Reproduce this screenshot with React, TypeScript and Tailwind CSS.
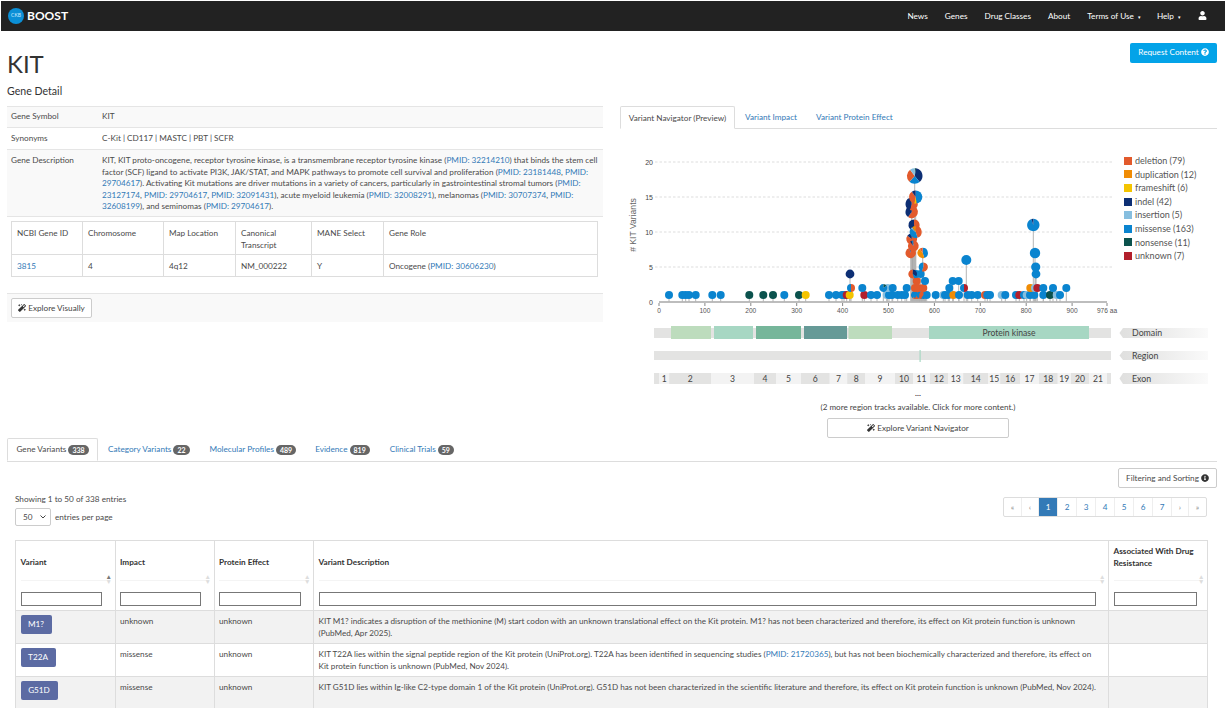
import { FaInfoCircle, FaMagic, FaQuestionCircle, FaUser } from "react-icons/fa";

const B = "#0a84cf";
const O = "#e25a2c";
const D = "#f08c05";
const Y = "#f4c400";
const N = "#0d2f74";
const L = "#86bedf";
const G = "#0b524d";
const R = "#b2202c";

type Slice = [string, number];
type Dot = { x: number; y: number; r?: number; c?: string; pie?: Slice[] };

const legend: [string, string][] = [
  [O, "deletion (79)"],
  [D, "duplication (12)"],
  [Y, "frameshift (6)"],
  [N, "indel (42)"],
  [L, "insertion (5)"],
  [B, "missense (163)"],
  [G, "nonsense (11)"],
  [R, "unknown (7)"],
];

const row = (y: number, list: [number, string][]): Dot[] => list.map(([x, c]) => ({ x, y, c }));
const OB: Slice[] = [[O, 0.6], [B, 0.4]];

const dots: Dot[] = [
  ...row(295, [
    [669, B], [682.3, B], [685.7, B], [689, B], [695.7, B], [712.3, B], [720.7, B], [749.3, G], [763.3, G], [773, G],
    [784.3, B], [799, G], [805.7, Y], [829, B], [836, B], [842, B], [844, B], [846.7, R], [849.7, Y], [864.3, R],
    [871, B], [877, B], [886.7, L], [889, B], [892, B], [897.7, B], [901.7, B], [905, B], [926.7, B], [935.7, B],
    [943.3, L], [945, B], [948.3, B], [953.3, D], [959, B], [967.7, B], [971.7, B], [977.7, B], [985, O], [987.3, B],
    [990, B], [1001.7, L], [1005.3, B], [1016, B], [1019.3, R], [1024, B], [1026.7, L], [1030, B], [1034.3, B],
    [1043.3, B], [1050, G], [1056.7, L], [1060, B],
  ]),
  { x: 915, y: 295, pie: OB }, { x: 917.3, y: 295, pie: OB }, { x: 920.7, y: 295, pie: OB }, { x: 923.3, y: 295, pie: [[B, 0.6], [O, 0.4]] },
  ...row(288, [[862.3, B], [887.7, L], [892.7, B], [906.7, B], [915, O], [918.3, O], [923.3, O], [949.3, B], [1030.3, D], [1035, L], [1037.3, R], [1043.3, B], [1053, B], [1066.3, B]]),
  { x: 851, y: 288, pie: [[O, 0.5], [B, 0.5]] },
  { x: 883.3, y: 288, pie: [[G, 0.15], [B, 0.85]] },
  { x: 964, y: 288, pie: [[R, 0.5], [B, 0.5]] },
  ...row(281, [[952.7, B], [958.7, B], [925, B], [916.7, O]]),
  { x: 850, y: 274, r: 4.4, c: N },
  { x: 916, y: 274, c: B },
  { x: 920.7, y: 274, c: B },
  { x: 1036, y: 274, r: 4.4, c: B },
  { x: 912.7, y: 274, r: 4.4, pie: [[N, 0.35], [B, 0.1], [O, 0.55]] },
  { x: 923.3, y: 267, r: 4.6, pie: [[O, 0.55], [B, 0.45]] },
  { x: 1035.7, y: 267, r: 4.6, c: B },
  { x: 966.3, y: 260, r: 5, c: B },
  { x: 910.7, y: 253, r: 5.2, pie: [[O, 0.95], [N, 0.05]] },
  { x: 922.7, y: 253, r: 5.2, pie: [[B, 0.45], [D, 0.45], [O, 0.1]] },
  { x: 1035, y: 253, r: 5.2, c: B },
  { x: 911.7, y: 239, r: 5.4, pie: [[O, 0.85], [N, 0.15]] },
  { x: 913.3, y: 246, r: 5.4, pie: [[O, 0.9], [N, 0.05], [B, 0.05]] },
  { x: 914, y: 225, r: 5.6, pie: [[O, 0.45], [N, 0.55]] },
  { x: 915.7, y: 232, r: 6, pie: [[O, 0.45], [B, 0.4], [L, 0.05], [D, 0.1]] },
  { x: 1033.3, y: 225, r: 6.2, pie: [[B, 0.95], [N, 0.05]] },
  { x: 911.7, y: 212, r: 6.2, pie: [[O, 0.6], [N, 0.4]] },
  { x: 911.7, y: 204, r: 6.2, pie: [[O, 0.55], [N, 0.45]] },
  { x: 915.7, y: 197, r: 6.6, pie: [[B, 0.48], [Y, 0.06], [O, 0.36], [N, 0.1]] },
  { x: 914.7, y: 176, r: 7.8, pie: [[G, 0.03], [N, 0.36], [B, 0.23], [O, 0.28], [L, 0.1]] },
];

const domains: [number, number, string][] = [
  [671, 711, "#bddcbd"],
  [714, 753, "#a7d7c3"],
  [756, 801, "#76b69a"],
  [804, 847, "#669a97"],
  [848.5, 892, "#bddcbd"],
  [929, 1089, "#a7d7c3"],
];

const exons: [number, number, string][] = [
  [659, 669.5, "1"], [669.5, 711, "2"], [711, 754, "3"], [754, 776, "4"], [776, 801, "5"], [801, 829.5, "6"], [829.5, 847.5, "7"],
  [847.5, 865, "8"], [865, 895, "9"], [895, 913, "10"], [913, 930, "11"], [930, 948, "12"], [948, 963.5, "13"], [963.5, 988, "14"],
  [988, 1000.5, "15"], [1000.5, 1020, "16"], [1020, 1039, "17"], [1039, 1057.5, "18"], [1057.5, 1071, "19"], [1071, 1089, "20"], [1089, 1107, "21"],
];

const tracks: [string, number, number][] = [
  ["Domain", 328, 338],
  ["Region", 351, 360],
  ["Exon", 373, 384],
];

function Pie({ d }: { d: Dot }) {
  const r = d.r ?? 4;
  let a = 0;
  return (
    <g>
      {d.pie!.map(([c, f], i) => {
        const s = a * Math.PI * 2;
        a += f;
        const e = a * Math.PI * 2;
        const p = `M${d.x} ${d.y}L${d.x + r * Math.sin(s)} ${d.y - r * Math.cos(s)}A${r} ${r} 0 ${f > 0.5 ? 1 : 0} 1 ${d.x + r * Math.sin(e)} ${d.y - r * Math.cos(e)}Z`;
        return <path key={i} d={p} fill={c} />;
      })}
    </g>
  );
}

function Chart() {
  return (
    <svg width="500" height="191" viewBox="620 129 500 191" className="block shrink-0" style={{ fontFamily: "'Liberation Sans', sans-serif" }}>
      {[162, 197, 232, 267].map((y) => (
        <line key={y} x1="655" x2="1112" y1={y} y2={y} stroke="#cfcfcf" strokeWidth="0.7" strokeDasharray="2.5 2" />
      ))}
      {[[0, 302], [5, 267], [10, 232], [15, 197], [20, 162]].map(([v, y]) => (
        <text key={v} x="653" y={y + 2.5} fontSize="7" fill="#444" textAnchor="end">{v}</text>
      ))}
      <text transform="translate(636 225) rotate(-90)" fontSize="8.6" fill="#666" textAnchor="middle"># KIT Variants</text>
      <rect x="659" y="301" width="448" height="2" fill="#bdbdbd" />
      <rect x="911" y="253" width="5" height="49" fill="#9c9c9c" />
      <rect x="911" y="285" width="15" height="17" fill="#b0b0b0" />
      {[0, 100, 200, 300, 400, 500, 600, 700, 800, 900].map((v) => {
        const x = 659 + v * 0.459;
        return (
          <g key={v}>
            <line x1={x} x2={x} y1="303" y2="306" stroke="#555" strokeWidth="0.7" />
            <text x={x} y="313" fontSize="6.6" fill="#555" textAnchor="middle">{v}</text>
          </g>
        );
      })}
      <line x1="1107" x2="1107" y1="303" y2="306" stroke="#555" strokeWidth="0.7" />
      <text x="1107" y="313" fontSize="6.6" fill="#555" textAnchor="middle">976 aa</text>
      {dots.map((d, i) => (
        <line key={i} x1={d.x} x2={d.x} y1={d.y} y2="302" stroke="#b4b4b4" strokeWidth="1" />
      ))}
      {dots.map((d, i) =>
        d.pie ? <Pie key={i} d={d} /> : <circle key={i} cx={d.x} cy={d.y} r={d.r ?? 4} fill={d.c} />,
      )}
    </svg>
  );
}

function Tracks() {
  return (
    <svg width="597" height="70" viewBox="620 320 597 70" className="block" style={{ fontFamily: "Lato, sans-serif" }}>
      <rect x="654" y="328" width="457" height="10" fill="#e3e3e2" />
      {domains.map(([a, b, c]) => (
        <rect key={a} x={a} y="326" width={b - a} height="13" fill={c} />
      ))}
      <text x="1009" y="335.5" fontSize="8.6" fill="#444" textAnchor="middle">Protein kinase</text>
      <rect x="654" y="351" width="457" height="9" fill="#e3e3e2" />
      <rect x="919.5" y="350" width="1.2" height="12" fill="#a7d7c3" />
      <rect x="654" y="373" width="457" height="11" fill="#e3e3e2" />
      {exons.map(([a, b, t], i) => (
        <g key={t}>
          <rect x={a} y="373" width={b - a} height="11" fill={i % 2 ? "#e3e3e2" : "#f3f3f3"} />
          <text x={(a + b) / 2} y="381.8" fontSize="8.6" fill="#444" textAnchor="middle">{t}</text>
        </g>
      ))}
      <defs>
        <linearGradient id="tag">
          <stop offset="0" stopColor="#dfdfde" />
          <stop offset="1" stopColor="#fafafa" />
        </linearGradient>
      </defs>
      {tracks.map(([t, a, b]) => (
        <g key={t}>
          <path d={`M1123 ${a}H1208V${b}H1123L1119.5 ${(a + b) / 2}Z`} fill="url(#tag)" />
          <text x="1132" y={(a + b) / 2 + 3} fontSize="8.8" fill="#444">{t}</text>
        </g>
      ))}
    </svg>
  );
}

function Pmid({ id }: { id: string }) {
  return (
    <>
      <a className="text-[#337ab7]">PMID:</a> <a className="text-[#337ab7]">{id}</a>
    </>
  );
}

function Badge({ n }: { n: string }) {
  return <span className="ml-[2px] rounded-full bg-[#666] px-[4px] text-[7px] font-bold leading-[10px] text-white">{n}</span>;
}

function ToolButton({ label, className }: { label: string; className: string }) {
  return (
    <button className={`flex items-center justify-center gap-[2px] rounded-[2px] border border-[#ccc] bg-white text-[8.2px] text-[#444] ${className}`}>
      <FaMagic className="h-[8px] w-[8px] text-[#333]" />
      {label}
    </button>
  );
}

const pages: [string, string][] = [
  ["«", "w-[18px] text-[#888]"],
  ["‹", "w-[17px] text-[#888]"],
  ["1", "w-[19px] bg-[#337ab7] text-white"],
  ["2", "w-[19px]"],
  ["3", "w-[19px]"],
  ["4", "w-[19px]"],
  ["5", "w-[19px]"],
  ["6", "w-[19px]"],
  ["7", "w-[19px]"],
  ["›", "w-[17px] text-[#888]"],
  ["»", "w-[17px] text-[#888]"],
];

const variantRows = [
  {
    name: "M1?",
    w: "w-[31px]",
    impact: "unknown",
    bg: "bg-[#f2f2f2]",
    desc: <>KIT M1? indicates a disruption of the methionine (M) start codon with an unknown translational effect on the Kit protein. M1? has not been characterized and therefore, its effect on Kit protein function is unknown (PubMed, Apr 2025).</>,
  },
  {
    name: "T22A",
    w: "w-[35px]",
    impact: "missense",
    bg: "bg-white",
    desc: <>KIT T22A lies within the signal peptide region of the Kit protein (UniProt.org). T22A has been identified in sequencing studies (<Pmid id="21720365" />), but has not been biochemically characterized and therefore, its effect on Kit protein function is unknown (PubMed, Nov 2024).</>,
  },
  {
    name: "G51D",
    w: "w-[37px]",
    impact: "missense",
    bg: "bg-[#f2f2f2]",
    desc: <>KIT G51D lies within Ig-like C2-type domain 1 of the Kit protein (UniProt.org). G51D has not been characterized in the scientific literature and therefore, its effect on Kit protein function is unknown (PubMed, Nov 2024).</>,
  },
];

function HeadCell({ title, arrow, last }: { title: string; arrow?: boolean; last?: boolean }) {
  return (
    <th className="border border-[#ddd] px-[4.5px] pb-[3px] pt-[5px] text-left align-top font-bold">
      <div className={`relative h-[35px] border-b border-[#f4f4f4] leading-[11.5px] ${last ? "pt-0" : "pt-[11px]"}`}>
        {title}
        <span className="absolute bottom-[-4px] right-[-2px] flex flex-col text-[6.5px] leading-[5px]">
          <span className={arrow ? "text-[#777]" : "text-[#ddd]"}>▲</span>
          <span className="text-[#ddd]">▼</span>
        </span>
      </div>
      <input className={`mt-[11px] block h-[14px] border border-[#777] bg-white ${last ? "w-[83px]" : "w-[calc(100%-8px)]"}`} />
    </th>
  );
}

export default function App() {
  return (
    <div className="h-[708px] w-[1226px] overflow-hidden bg-white pt-px font-['Lato',sans-serif] text-[8.2px] text-[#4a4a4a]">
      <nav className="mx-px flex h-[30px] items-center justify-between bg-[#222] pl-[7px] pr-[18px] text-[8.2px] text-white">
        <div className="flex items-center gap-[3px]">
          <span className="flex h-[16px] w-[16px] items-center justify-center rounded-full bg-[#0b8fd6] text-[5px] text-[#cfeaff]">CKB</span>
          <span className="text-[12px] font-bold">BOOST</span>
        </div>
        <div className="flex items-center">
          <span>News</span>
          <span className="ml-[17px]">Genes</span>
          <span className="ml-[17px]">Drug Classes</span>
          <span className="ml-[17px]">About</span>
          <span className="ml-[17px]">Terms of Use <span className="ml-[2px] text-[5px]">▾</span></span>
          <span className="ml-[16px]">Help <span className="ml-[2px] text-[5px]">▾</span></span>
          <FaUser className="ml-[17px] h-[9px] w-[9px]" />
        </div>
      </nav>

      <main className="pl-[7px] pr-[9px]">
        <div className="flex h-[75px] justify-between">
          <div>
            <h1 className="mt-[20px] text-[24px] leading-[26px] text-[#333]">KIT</h1>
            <h2 className="mt-[7px] text-[10.6px] leading-[14px] text-[#333]">Gene Detail</h2>
          </div>
          <button className="mt-[12px] flex h-[20px] w-[87px] items-center justify-center gap-[2px] rounded-[2px] bg-[#03a3e8] pb-[2px] text-[8.2px] text-white">
            Request Content <FaQuestionCircle className="h-[8px] w-[8px]" />
          </button>
        </div>

        <div className="flex h-[332px] justify-between">
          <section className="w-[596px]">
            <table className="w-full table-fixed border-collapse leading-[11.5px]">
              <tbody>
                <tr className="h-[21px] border-y border-[#e5e5e5] bg-[#f9f9f9]">
                  <td className="w-[95px] pl-[4px]">Gene Symbol</td>
                  <td>KIT</td>
                </tr>
                <tr className="h-[22px] border-b border-[#e5e5e5]">
                  <td className="pl-[4px]">Synonyms</td>
                  <td>C-Kit | CD117 | MASTC | PBT | SCFR</td>
                </tr>
                <tr className="h-[67px] border-b border-[#e5e5e5] bg-[#f9f9f9]">
                  <td className="pl-[4px] align-top pt-[5px]">Gene Description</td>
                  <td className="pr-[4px] align-top pt-[5px]">
                    KIT, KIT proto-oncogene, receptor tyrosine kinase, is a transmembrane receptor tyrosine kinase (<Pmid id="32214210" />) that binds the stem cell factor (SCF) ligand to activate PI3K, JAK/STAT, and MAPK pathways to promote cell survival and proliferation (<Pmid id="23181448" />, <Pmid id="29704617" />). Activating Kit mutations are driver mutations in a variety of cancers, particularly in gastrointestinal stromal tumors (<Pmid id="23127174" />, <Pmid id="29704617" />, <Pmid id="32091431" />), acute myeloid leukemia (<Pmid id="32008291" />), melanomas (<Pmid id="30707374" />, <Pmid id="32608199" />), and seminomas (<Pmid id="29704617" />).
                  </td>
                </tr>
              </tbody>
            </table>

            <table className="ml-[4px] mt-[4px] w-[587px] table-fixed border-collapse border border-[#ddd] leading-[12px]">
              <tbody>
                <tr className="h-[33px]">
                  <td className="w-[71px] border border-[#ddd] px-[5px] pt-[5px] align-top">NCBI Gene ID</td>
                  <td className="w-[81px] border border-[#ddd] px-[5px] pt-[5px] align-top">Chromosome</td>
                  <td className="w-[72px] border border-[#ddd] px-[5px] pt-[5px] align-top">Map Location</td>
                  <td className="w-[76px] border border-[#ddd] px-[5px] pt-[5px] align-top">Canonical Transcript</td>
                  <td className="w-[72px] border border-[#ddd] px-[5px] pt-[5px] align-top">MANE Select</td>
                  <td className="border border-[#ddd] px-[5px] pt-[5px] align-top">Gene Role</td>
                </tr>
                <tr className="h-[22px]">
                  <td className="border border-[#ddd] px-[5px]"><a className="text-[#337ab7]">3815</a></td>
                  <td className="border border-[#ddd] px-[5px]">4</td>
                  <td className="border border-[#ddd] px-[5px]">4q12</td>
                  <td className="border border-[#ddd] px-[5px]">NM_000222</td>
                  <td className="border border-[#ddd] px-[5px]">Y</td>
                  <td className="border border-[#ddd] px-[5px]">Oncogene (<Pmid id="30606230" />)</td>
                </tr>
              </tbody>
            </table>

            <div className="mt-[16px] h-[29px] border-t border-[#e5e5e5] bg-[#f9f9f9] pl-[4px] pt-[4px]">
              <ToolButton label="Explore Visually" className="h-[20px] w-[81px]" />
            </div>
          </section>

          <section className="w-[597px]">
            <div className="flex h-[23px] border-b border-[#ddd] text-[#337ab7]">
              <span className="h-[23px] w-[115px] rounded-t-[2px] border border-b-white border-[#ddd] bg-white pt-[6px] text-center leading-[11px] text-[#4a4a4a]">Variant Navigator (Preview)</span>
              <span className="ml-[10px] pt-[6px] leading-[11px]">Variant Impact</span>
              <span className="ml-[19px] pt-[6px] leading-[11px]">Variant Protein Effect</span>
            </div>
            <div className="flex">
              <Chart />
              <ul className="ml-[4px] mt-[25px] text-[9px] leading-[13.6px] text-[#555]">
                {legend.map(([c, t]) => (
                  <li key={t} className="flex h-[13.6px] items-center gap-[3px]">
                    <span className="h-[8px] w-[8px]" style={{ background: c }} />
                    {t}
                  </li>
                ))}
              </ul>
            </div>
            <Tracks />
            <div className="mt-[1px] text-center text-[8.1px] leading-[10px] text-[#444]">
              <div className="ml-[-1px] h-[11px] font-bold leading-[4px]">...</div>
              <div className="ml-[-1px]">(2 more region tracks available. Click for more content.)</div>
            </div>
            <ToolButton label="Explore Variant Navigator" className="ml-[207px] mt-[6px] h-[20px] w-[182px]" />
          </section>
        </div>

        <div className="flex h-[24px] border-b border-[#ddd] text-[#337ab7]">
          <span className="flex w-[91px] items-center justify-center rounded-t-[2px] border border-b-white border-[#ddd] bg-white text-[#4a4a4a]">Gene Variants <Badge n="338" /></span>
          <span className="ml-[10px] flex items-center">Category Variants <Badge n="22" /></span>
          <span className="ml-[20px] flex items-center">Molecular Profiles <Badge n="489" /></span>
          <span className="ml-[19px] flex items-center">Evidence <Badge n="819" /></span>
          <span className="ml-[20px] flex items-center">Clinical Trials <Badge n="59" /></span>
        </div>

        <div className="flex justify-end pt-[6px]">
          <button className="flex h-[20px] w-[99px] items-center justify-center gap-[2px] rounded-[2px] border border-[#ccc] bg-white text-[8.2px]">
            Filtering and Sorting <FaInfoCircle className="h-[8px] w-[8px] text-[#333]" />
          </button>
        </div>

        <div className="ml-[8px] mr-[10px] mt-[6px] flex h-[46px] justify-between">
          <div>
            <div className="leading-[11px]">Showing 1 to 50 of 338 entries</div>
            <div className="mt-[3px] flex items-center gap-[4px]">
              <div className="flex h-[18px] w-[36px] items-center justify-between rounded-[2px] border border-[#ccc] pl-[7px] pr-[4px]">
                50
                <svg width="6" height="4" viewBox="0 0 6 4"><path d="M.5.5 3 3 5.5.5" fill="none" stroke="#444" strokeWidth="1" /></svg>
              </div>
              entries per page
            </div>
          </div>
          <div className="mt-[3px] flex h-[20px] rounded-[2px] border border-[#ddd] text-[#337ab7]">
            {pages.map(([p, cls]) => (
              <span key={p} className={`flex items-center justify-center border-r border-[#eee] last:border-r-0 ${cls}`}>
                {p}
              </span>
            ))}
          </div>
        </div>

        <table className="ml-[8px] w-[1192px] table-fixed border-collapse border border-[#ddd] leading-[11.5px]">
          <colgroup>
            <col className="w-[99.5px]" />
            <col className="w-[99px]" />
            <col className="w-[99.5px]" />
            <col className="w-[795px]" />
            <col className="w-[99px]" />
          </colgroup>
          <thead>
            <tr className="h-[70px] text-[#333]">
              <HeadCell title="Variant" arrow />
              <HeadCell title="Impact" />
              <HeadCell title="Protein Effect" />
              <HeadCell title="Variant Description" />
              <HeadCell title="Associated With Drug Resistance" last />
            </tr>
          </thead>
          <tbody>
            {variantRows.map((v) => (
              <tr key={v.name} className={`h-[33px] ${v.bg}`}>
                <td className="border border-[#ddd] pl-[4.5px] pt-[4px] align-top">
                  <span className={`flex h-[19px] ${v.w} items-center justify-center rounded-[2px] bg-[#5c6ba3] text-[8.2px] text-white`}>{v.name}</span>
                </td>
                <td className="border border-[#ddd] px-[4.5px] pt-[5px] align-top">{v.impact}</td>
                <td className="border border-[#ddd] px-[4.5px] pt-[5px] align-top">unknown</td>
                <td className="border border-[#ddd] px-[4.5px] pt-[5px] align-top text-[8.15px]">{v.desc}</td>
                <td className="border border-[#ddd]" />
              </tr>
            ))}
          </tbody>
        </table>
      </main>
    </div>
  );
}
